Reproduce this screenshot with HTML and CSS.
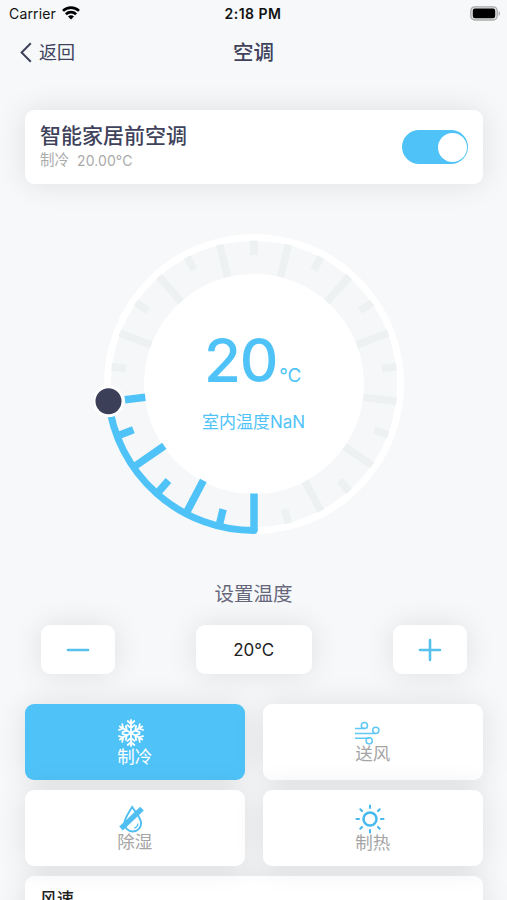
FILE: index.html
```html
<!DOCTYPE html>
<html lang="zh-CN">
<head>
<meta charset="utf-8">
<title>空调</title>
<link rel="stylesheet" href="styles.css">
</head>
<body>
<div class="screen">
  <div class="status">
    <div class="carrier"><span>Carrier</span>
      <svg width="18" height="14" viewBox="0 0 18 14" fill="none" stroke="#000" stroke-width="2.700"><path d="M1 4.900a11.400 11.400 0 0 1 16 0M3.900 8.200a7.300 7.300 0 0 1 10.200 0"/><path d="M9 13.600L6 10.600a4.200 4.200 0 0 1 6 0z" fill="#000" stroke="none"/></svg>
    </div>
    <div class="time">2:18 PM</div>
    <svg class="battery" width="31" height="15" viewBox="0 0 31 15"><rect x=".8" y=".8" width="26.4" height="13.2" rx="4" fill="#e4e4e4" stroke="#aaa" stroke-width="1.3"/><rect x="2.8" y="2.6" width="22.4" height="9.6" rx="2.2"/><path d="M28.600 5v5c1.800-.7 1.800-4.300 0-5z" fill="#aaa"/></svg>
  </div>
  <header class="nav">
    <div class="back"><svg width="12" height="21" viewBox="0 0 12 21" fill="none" stroke="#40425b" stroke-width="2"><path d="M10.800 1.200L1.600 10.500l9.200 9.300"/></svg><span>返回</span></div>
    <h1>空调</h1>
  </header>
  <section class="card device">
    <div><h2>智能家居前空调</h2><p><span>制冷</span><span class="deg">20.00°C</span></p></div>
    <div class="switch"><i></i></div>
  </section>
  <div class="dial">
    <svg width="320" height="320" viewBox="-160 -160 320 320">
      <defs><path id="s" d="M0-143.500V-129"/><path id="l" d="M0-143.500V-109"/></defs>
      <circle r="146.500" fill="#f5f7f9" stroke="#fff" stroke-width="7"/>
      <g class="ticks">
        <use href="#s"/><use href="#l" transform="rotate(13.846)"/><use href="#s" transform="rotate(27.692)"/><use href="#l" transform="rotate(41.538)"/><use href="#s" transform="rotate(55.385)"/><use href="#l" transform="rotate(69.231)"/><use href="#s" transform="rotate(83.077)"/><use href="#l" transform="rotate(96.923)"/><use href="#s" transform="rotate(110.769)"/><use href="#l" transform="rotate(124.615)"/><use href="#s" transform="rotate(138.462)"/><use href="#l" transform="rotate(152.308)"/><use href="#s" transform="rotate(166.154)"/>
        <use href="#s" transform="rotate(-83.077)"/><use href="#l" transform="rotate(-69.231)"/><use href="#s" transform="rotate(-55.385)"/><use href="#l" transform="rotate(-41.538)"/><use href="#s" transform="rotate(-27.692)"/><use href="#l" transform="rotate(-13.846)"/>
      </g>
      <circle r="110" fill="#fff"/>
      <g class="ticks on">
        <path d="M0 109.500V147"/><use href="#s" transform="rotate(-166.154)"/><use href="#l" transform="rotate(-152.308)"/><use href="#s" transform="rotate(-138.462)"/><use href="#l" transform="rotate(-124.615)"/><use href="#s" transform="rotate(-110.769)"/><path d="M0-130V-109.500" transform="rotate(-96.923)"/>
      </g>
      <path d="M0 146.500A146.500 146.500 0 0 1-145.500 17" fill="none" stroke="#4fc3f7" stroke-width="7" stroke-linecap="round"/>
      <circle cx="-145.500" cy="17.300" r="16" fill="#fff"/><circle cx="-145.500" cy="17.300" r="13" fill="#3c3f58"/>
    </svg>
    <div class="reading"><div class="value"><b>20</b><span>°C</span></div><div class="room">室内温度NaN</div></div>
  </div>
  <div class="label">设置温度</div>
  <div class="stepper">
    <div class="card step"><svg width="24" height="24" viewBox="0 0 24 24" stroke="#57c1ee" stroke-width="2.600" stroke-linecap="round"><path d="M2 12h20"/></svg></div>
    <div class="card current">20°C</div>
    <div class="card step"><svg width="24" height="24" viewBox="0 0 24 24" stroke="#57c1ee" stroke-width="2.600" stroke-linecap="round"><path d="M2 12h20M12 2v20"/></svg></div>
  </div>
  <div class="modes">
    <div class="card mode active">
      <svg width="28" height="28" viewBox="-14 -14 28 28" fill="none" stroke="#fff" stroke-width="1.800" stroke-linecap="round"><defs><path id="arm" d="M0 0V-13M-3.300-12L0-9l3.300-3M-3.500-7.900L0-4.900l3.500-3"/></defs><use href="#arm"/><use href="#arm" transform="rotate(60)"/><use href="#arm" transform="rotate(120)"/><use href="#arm" transform="rotate(180)"/><use href="#arm" transform="rotate(240)"/><use href="#arm" transform="rotate(300)"/></svg>
      <span>制冷</span>
    </div>
    <div class="card mode fan">
      <svg width="28" height="24" viewBox="0 0 28 24" fill="none" stroke="#5fc8f5" stroke-width="1.500"><path d="M1 7.600h9.600M1 12.400h20.600M1 17.200h14.400"/><circle cx="10.400" cy="4.500" r="3.100"/><circle cx="21.800" cy="9.300" r="3.100"/><circle cx="15.200" cy="19.800" r="3.100"/></svg>
      <span>送风</span>
    </div>
    <div class="card mode dry">
      <svg width="28" height="28" viewBox="0 0 28 28" fill="none" stroke="#4fbef1" stroke-width="1.900"><path d="M14.200 2C11 7.500 6.500 13 6.500 18.200a8.300 8.300 0 0 0 16.600 0C23.100 13 17.500 7.500 14.200 2z"/><path d="M20 18.500c-.2 2.300-1.700 4-3.900 4.600" stroke-width="1.300"/><path d="M3 23.500L24 3.700" stroke-width="5.200"/></svg>
      <span>除湿</span>
    </div>
    <div class="card mode heat">
      <svg width="30" height="30" viewBox="-15 -15 30 30" fill="none" stroke="#46b9ef" stroke-width="2.100" stroke-linecap="round"><circle r="6.500" stroke-width="2.500"/><path d="M0-11v-2.500M0 11v2.500M-11 0h-2.500M11 0h2.500M-8-8l-1.700-1.700M8-8l1.700-1.700M-8 8l-1.700 1.700M8 8l1.700 1.700"/></svg>
      <span>制热</span>
    </div>
  </div>
  <section class="card wind">风速</section>
</div>
</body>
</html>
```
FILE: styles.css
```css
* { box-sizing: border-box; }
body, h1, h2, p { margin: 0; }
body { background: #f6f8fa; font-family: Inter, "Noto Sans CJK SC", sans-serif; color: #40425b; }
svg { display: block; flex: none; }
.screen { width: 507px; height: 900px; overflow: hidden; }
.card { background: #fff; border-radius: 9px; box-shadow: 0 0 30px rgba(0, 0, 0, .1); }
.status { display: grid; grid-template-columns: 1fr auto 1fr; height: 28px; align-items: center; padding: 0 6px 0 9px; color: #111; font-size: 14px; }
.carrier { display: flex; align-items: center; gap: 6px; letter-spacing: .15px; }
.carrier span { margin-top: -2px; }
.carrier svg { margin-top: -3px; }
.time { font-weight: 600; font-size: 14px; letter-spacing: .5px; margin: -1px 2px 0 -2px; }
.battery { justify-self: end; margin-top: -2px; }
.nav { display: grid; grid-template-columns: 1fr auto 1fr; height: 48px; align-items: center; padding: 0 20px; }
.back { display: flex; align-items: center; gap: 7px; font-size: 18px; line-height: 24px; }
.back span { padding-top: 2px; }
h1 { font-size: 20.500px; font-weight: 500; line-height: 28px; padding-top: 2px; }
.device { margin: 34px 24.500px 0 25px; height: 74px; padding: 11px 15px 0 15px; display: flex; justify-content: space-between; }
h2 { font-size: 21px; line-height: 30px; font-weight: 500; }
.device p { display: flex; gap: 8px; font-size: 14.500px; line-height: 20px; color: #aaa; margin-top: -1px; }
.deg { font-size: 14px; padding-top: 1px; letter-spacing: .1px; }
.switch { width: 66px; height: 34px; margin-top: 9px; border-radius: 17px; background: #4fc3f7; display: flex; justify-content: flex-end; align-items: center; padding-right: 1px; }
.switch i { width: 29px; height: 29px; border-radius: 50%; background: #fff; }
.dial { width: 320px; height: 320px; margin: 40px 0 0 94px; display: grid; }
.dial > * { grid-area: 1 / 1; }
.ticks { stroke: #edf1f2; stroke-width: 7.500px; fill: none; }
.on { stroke: #4fc3f7; stroke-width: 7.500px; }
.reading { color: #4fc3f7; display: flex; flex-direction: column; align-items: center; padding-top: 98px; }
.value { display: flex; align-items: baseline; height: 76px; line-height: 76px; margin-left: -3px; }
.value b { font-weight: 500; font-size: 60px; letter-spacing: -1.200px; }
.value span { font-size: 19px; margin-left: 2px; letter-spacing: -.3px; }
.room { font-size: 17px; line-height: 24px; margin: 12px 0 0 -1px; }
.label { text-align: center; font-size: 19.500px; line-height: 28px; margin-top: 36px; color: #66677b; }
.stepper { display: flex; justify-content: space-between; margin: 17px 40.500px 0 41px; height: 49px; }
.step { width: 74px; display: grid; place-items: center; }
.current { width: 116px; display: grid; place-items: center; font-size: 17px; color: #222; }
.modes { display: grid; grid-template-columns: 219.500px 219.500px; grid-template-rows: 75.500px 76px; gap: 10px 18.500px; margin: 30px 24.500px 0 25px; }
.mode { display: flex; flex-direction: column; align-items: center; padding-top: 15px; color: #a5a5a5; font-size: 17.500px; line-height: 22px; }
.mode svg { margin-left: -8px; }
.mode span { margin-top: -1px; }
.active { background: #4fc3f7; color: #fff; }
.mode.fan svg { margin: 2px 0 0 -9px; }
.mode.fan span, .mode.dry span { margin-top: -2px; }
.mode.dry svg, .mode.heat svg { margin-left: -6px; }
.heat { padding-top: 14px; }
.mode.heat span { margin-top: -2px; }
.wind { margin: 10px 24.500px 0 25px; height: 80px; padding: 10px 15px; font-size: 17px; line-height: 26px; color: #222; font-weight: 500; }
```
